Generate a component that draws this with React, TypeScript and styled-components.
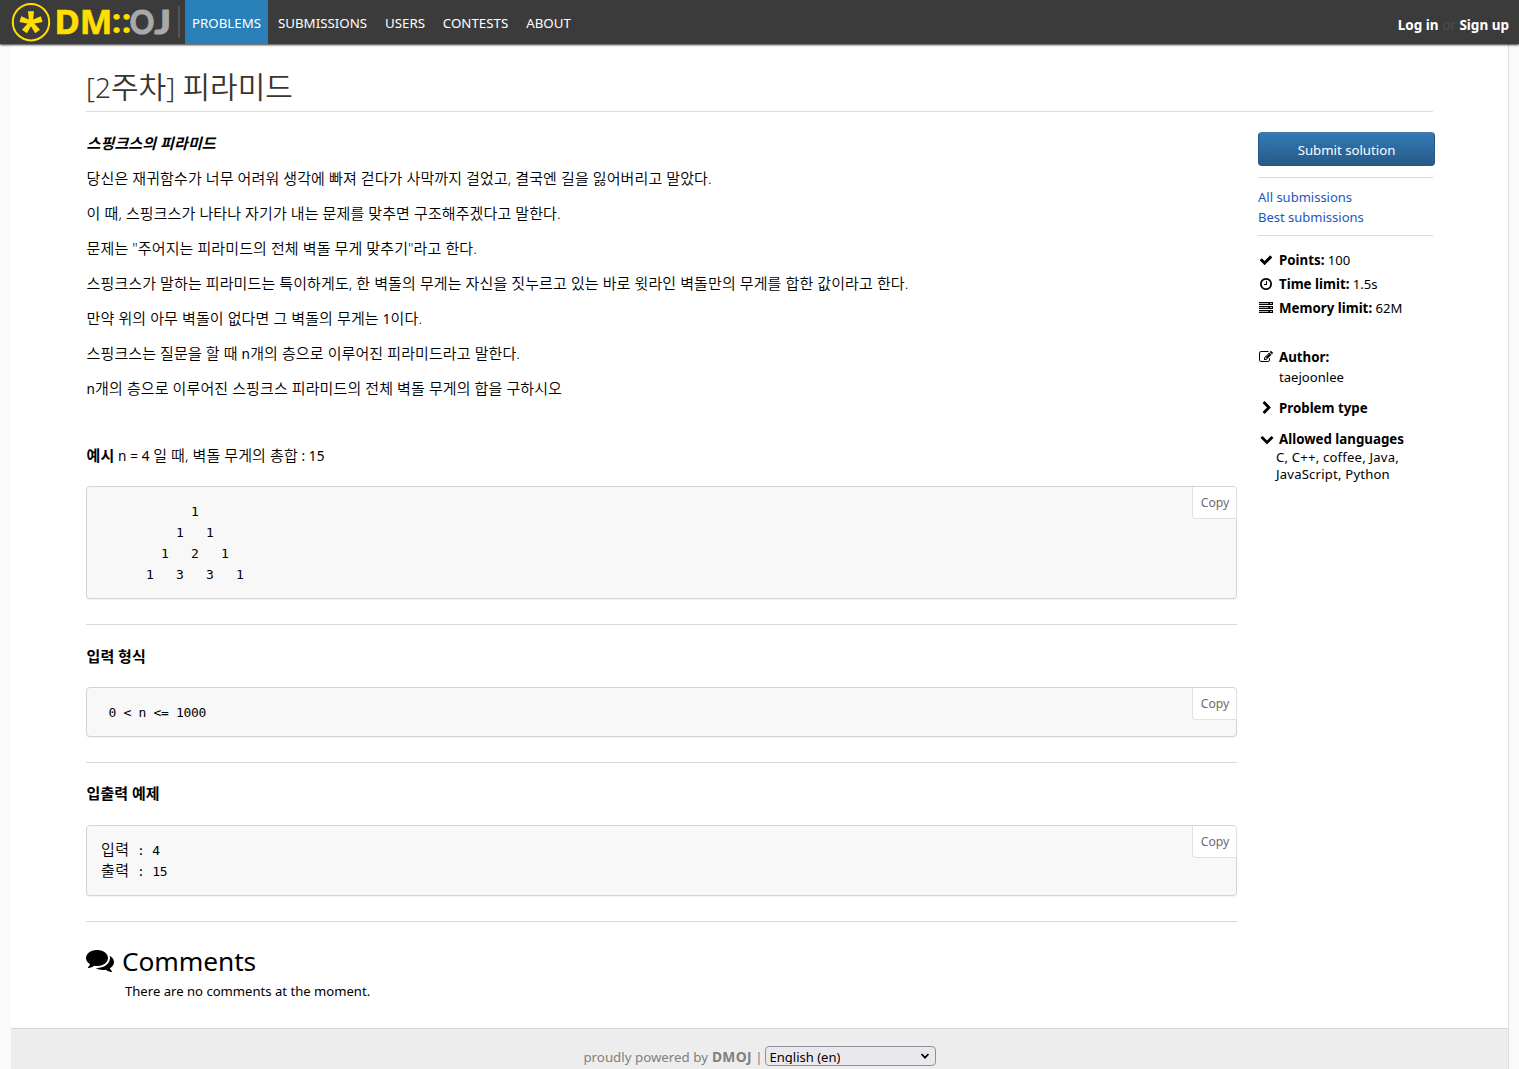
import React from "react";
import styled, { createGlobalStyle } from "styled-components";

const sans = `"Noto Sans", "Noto Sans CJK KR", sans-serif`;

const GlobalStyle = createGlobalStyle`
  * { box-sizing: border-box; }
  body {
    margin: 0;
    background: #fafafa;
    color: #000;
    font-family: ${sans};
    font-size: 13.1px;
    overflow: hidden;
  }
  a { text-decoration: none; color: inherit; }
`;

const Page = styled.div`
  display: flex;
  flex-direction: column;
  height: 1069px;
`;

/* ---------- navigation ---------- */

const NavBar = styled.nav`
  display: flex;
  flex: 0 0 44px;
  height: 44px;
  padding-right: 10px;
  background: #3b3b3b;
  box-shadow: 0 1px 2px #333;
  position: relative;
`;

const LogoLink = styled.a`
  display: block;
  width: 178px;
  height: 44px;
`;

const LogoSvg = styled.svg`
  display: block;
  overflow: visible;
`;

const NavDivider = styled.span`
  width: 2px;
  height: 32px;
  margin: 6px 5px 0 0;
  background: #555;
`;

const NavItem = styled.a<{ $width: number; $active?: boolean }>`
  width: ${(p) => p.$width}px;
  height: 44px;
  line-height: 47px;
  text-align: center;
  font-size: 13.3px;
  color: #fff;
  background: ${(p) => (p.$active ? "#2980b9" : "transparent")};
`;

const UserLinks = styled.span`
  margin-left: auto;
  line-height: 51px;
  height: 44px;
  font-size: 13.5px;
  color: #4f4c47;
  white-space: pre;
  a { color: #fff; font-weight: 700; }
`;

/* ---------- content ---------- */

const Content = styled.main`
  flex: 0 0 984px;
  margin: 0 10px 0 11px;
  padding: 20px 75px 0;
  background: #fff;
  border-right: 1px solid #ddd;
`;

const Title = styled.h2`
  height: 48px;
  margin: 0;
  border-bottom: 1px solid #ddd;
  font-size: 28px;
  font-weight: 300;
  line-height: 46px;
  color: #393630;
`;

const TitleHangul = styled.span`
  font-size: 30px;
  font-weight: 350;
`;

const Columns = styled.div`
  display: flex;
  gap: 21px;
`;

const Statement = styled.article`
  width: 1151px;
  padding-top: 21px;
  font-size: 15px;
`;

const Paragraph = styled.p<{ $after?: number }>`
  height: 21px;
  margin: 0 0 ${(p) => p.$after ?? 14}px;
  padding-left: 0.6px;
  line-height: 21px;
  letter-spacing: 0.1px;
  white-space: pre;
`;

const Hangeul = styled.span`
  font-family: "Noto Sans", "Noto Sans CJK KR", sans-serif;
  font-weight: 350;
`;

const Latin = styled.span`
  font-size: 13.6px;
`;

const Heading = styled.h4<{ $after: number }>`
  height: 21px;
  margin: 0 0 ${(p) => p.$after}px;
  padding-left: 0.6px;
  line-height: 21px;
  font-size: 15px;
  font-weight: 700;
`;

const CodeBox = styled.div`
  position: relative;
  padding: 14px 14px 13px;
  border: 1px solid #d3d3d3;
  border-radius: 4px;
  background: #f8f8f8;
  box-shadow: 0 1px 1px rgba(0, 0, 0, 0.06);
`;

const CodeLines = styled.div`
  display: flex;
  flex-direction: column;
  font: 13px/21px "DejaVu Sans Mono", monospace;
  letter-spacing: -0.32px;
  white-space: pre;
`;

const CodeLine = styled.span`
  display: block;
  height: 21px;
`;

const CodeHangul = styled.span`
  font: 350 15px/0 "Noto Sans CJK KR", sans-serif;
  letter-spacing: 0.5px;
`;

const CopyButton = styled.span`
  position: absolute;
  top: 0;
  right: -1px;
  width: 45px;
  height: 32px;
  padding-left: 1px;
  border: 1px solid #e0e0e8;
  border-top: 0;
  border-radius: 0 4px 0 4px;
  background: #fff;
  color: #6c6c6c;
  font-size: 12.2px;
  line-height: 32px;
  text-align: center;
`;

const Rule = styled.hr<{ $before: number; $after: number }>`
  height: 1px;
  margin: ${(p) => p.$before}px 0 ${(p) => p.$after}px;
  border: 0;
  background: #d9d9d9;
`;

const CommentsTitle = styled.h2`
  display: flex;
  align-items: center;
  gap: 8px;
  height: 38px;
  margin: 0;
  font-size: 26.3px;
  font-weight: 400;
  line-height: 36px;
  letter-spacing: -0.1px;
  svg { margin-bottom: 2px; }
`;

const NoComments = styled.p`
  height: 20px;
  margin: 1px 0 0 39px;
  font-size: 13.1px;
  line-height: 20px;
`;

/* ---------- sidebar ---------- */

const Sidebar = styled.aside`
  width: 175px;
  padding-top: 20px;
`;

const SubmitButton = styled.a`
  display: block;
  width: 177px;
  height: 34px;
  border: 1px solid #245682;
  border-top-color: #4d7da6;
  border-radius: 4px;
  background: linear-gradient(#337ab7, #265a88);
  color: #fff;
  font-size: 13.2px;
  line-height: 34px;
  text-align: center;
`;

const SideLink = styled.a`
  display: block;
  height: 20px;
  line-height: 20px;
  font-size: 13px;
  color: #1958c1;
`;

const InfoRow = styled.div<{ $height: number; $before?: number }>`
  display: flex;
  align-items: center;
  gap: 5px;
  height: ${(p) => p.$height}px;
  margin-top: ${(p) => p.$before ?? 0}px;
  white-space: nowrap;
  b { font-size: 13.3px; }
`;

const Author = styled.div`
  height: 20px;
  margin: 0 0 5px 21px;
  line-height: 20px;
`;

const Languages = styled.div`
  margin: -5px 0 0 18px;
  line-height: 17.4px;
  letter-spacing: 0.2px;
  white-space: pre;
`;

/* ---------- footer ---------- */

const Footer = styled.footer`
  display: flex;
  flex: 1;
  justify-content: center;
  align-items: flex-start;
  margin: 0 10px 0 11px;
  padding-top: 17px;
  border-top: 1px solid #d5d5d5;
  border-right: 1px solid #ddd;
  background: #ededed;
  color: #808080;
`;

const FooterText = styled.span`
  font-size: 13.3px;
  line-height: 22px;
  white-space: pre;
  b { margin-left: 0.6px; font-size: 13.8px; letter-spacing: 0.3px; }
`;

const LanguageSelect = styled.span`
  display: flex;
  justify-content: space-between;
  width: 171px;
  height: 20px;
  margin-left: 2px;
  padding: 0 5px 0 4px;
  overflow: hidden;
  border: 1px solid #8f8f9d;
  border-radius: 4px;
  background: #e9e9ed;
  color: #000;
`;

const SelectValue = styled.span`
  height: 16px;
  margin-top: 1px;
  overflow: hidden;
  font-size: 13px;
  line-height: 19px;
`;

const SelectArrow = styled.svg`
  width: 10px;
  height: 18px;
`;

/* ---------- icons ---------- */

const icons = {
  check: "M1671 566q0 40-28 68l-724 724-136 136q-28 28-68 28t-68-28l-136-136-362-362q-28-28-28-68t28-68l136-136q28-28 68-28t68 28l294 295 656-657q28-28 68-28t68 28l136 136q28 28 28 68z",
  clock: "M1024 544v448q0 14-9 23t-23 9h-320q-14 0-23-9t-9-23v-64q0-14 9-23t23-9h224v-352q0-14 9-23t23-9h64q14 0 23 9t9 23zm416 352q0-148-73-273t-198-198-273-73-273 73-198 198-73 273 73 273 198 198 273 73 273-73 198-198 73-273zm224 0q0 209-103 385.5t-279.5 279.5-385.5 103-385.5-103-279.5-279.5-103-385.5 103-385.5 279.5-279.5 385.5-103 385.5 103 279.5 279.5 103 385.5z",
  edit: "M888 1184l116-116-152-152-116 116v56h96v96h56zm440-720q-16-16-33 1l-350 350q-17 17-1 33t33-1l350-350q17-17 1-33zm80 594v190q0 119-84.5 203.5t-203.5 84.5h-832q-119 0-203.5-84.5t-84.5-203.5v-832q0-119 84.5-203.5t203.5-84.5h832q63 0 117 25 15 7 18 23 3 17-9 29l-49 49q-14 14-32 8-23-6-45-6h-832q-66 0-113 47t-47 113v832q0 66 47 113t113 47h832q66 0 113-47t47-113v-126q0-13 9-22l64-64q15-15 35-7t20 29zm-96-738l288 288-672 672h-288v-288zm444 132l-92 92-288-288 92-92q28-28 68-28t68 28l152 152q28 28 28 68t-28 68z",
  right: "M1363 877l-742 742q-19 19-45 19t-45-19l-166-166q-19-19-19-45t19-45l531-531-531-531q-19-19-19-45t19-45l166-166q19-19 45-19t45 19l742 742q19 19 19 45t-19 45z",
  down: "M1683 808l-742 741q-19 19-45 19t-45-19l-742-741q-19-19-19-45.500t19-45.500l166-165q19-19 45-19t45 19l531 531 531-531q19-19 45-19t45 19l166 165q19 19 19 45.500t-19 45.500z",
  comments: "M1408 768q0 139-94 257t-256.500 186.500-353.500 68.500q-86 0-176-16-124 88-278 128-36 9-86 16h-3q-11 0-20.500-8t-11.500-21q-1-3-1-6.500t.5-6.500 2-6l2.500-5 3.500-5.500 4-5 4.500-5 4-4.500q5-6 23-25t26-29.500 22.500-29 25-38.500 20.500-44q-124-72-195-177t-71-224q0-139 94-257t256.500-186.500 353.500-68.500 353.500 68.500 256.500 186.500 94 257zm384 256q0 120-71 224.500t-195 176.500q10 24 20.500 44t25 38.500 22.500 29 26 29.500 23 25q1 1 4 4.500t4.500 5 4 5 3.500 5.500l2.500 5 2 6 .5 6.500-1 6.500q-3 14-13 22t-22 7q-50-7-86-16-154-40-278-128-90 16-176 16-271 0-472-132 58 4 88 4 161 0 309-45t264-129q125-92 192-212t67-254q0-77-23-152 129 71 204 178t75 230z",
};

const IconSvg = styled.svg<{ $size: number; $shift: number }>`
  flex: none;
  width: ${(p) => p.$size}px;
  height: ${(p) => p.$size}px;
  margin-left: ${(p) => p.$shift}px;
  margin-right: ${(p) => (p.$size > 20 ? 0 : 2 - p.$shift)}px;
  fill: #000;
`;

function Icon({ name, size = 14, shift = 1 }: { name: keyof typeof icons; size?: number; shift?: number }) {
  return (
    <IconSvg $size={size} $shift={shift} viewBox="0 0 1792 1792">
      <path d={icons[name]} />
    </IconSvg>
  );
}

function ServerIcon() {
  return (
    <IconSvg $size={14} $shift={1} viewBox="0 0 14 14">
      {[1, 5, 9].map((y) => (
        <g key={y}>
          <path d={`M0 ${y}h14v3H0z`} opacity="0.3" />
          <path d={`M0 ${y}h14v1H0zM0 ${y + 2}h14v1H0zM9.500 ${y}h1.500v3h-1.500zM13 ${y}h1v3h-1z`} />
        </g>
      ))}
    </IconSvg>
  );
}

function Logo() {
  return (
    <LogoSvg width="178" height="44" viewBox="0 0 178 44" fontFamily='"Noto Sans", sans-serif' fontWeight="700">
      <circle cx="31" cy="22.200" r="18.200" fill="none" stroke="#ffde00" strokeWidth="2" />
      <g fill="#ffde00">
        {[0, 72, 144, 216, 288].map((a) => (
          <path key={a} d="M29.200 23L28 11.300H34L32.800 23Z" transform={`rotate(${a} 31 22.500)`} />
        ))}
      </g>
      <text x="54.500" y="34" fontSize="33.500" fill="#ffde00" stroke="#ffde00" strokeWidth="0.600" textLength="58" lengthAdjust="spacingAndGlyphs">DM</text>
      <text x="111.500" y="32.500" fontSize="33.500" fill="#ffde00" textLength="20" lengthAdjust="spacingAndGlyphs">::</text>
      <g fontFamily="Lato, sans-serif" fontSize="33" fill="#a9a9a9" stroke="#a9a9a9" strokeWidth="1.200">
        <text x="129.800" y="34" textLength="24.500" lengthAdjust="spacingAndGlyphs">O</text>
        <text x="154.500" y="34" textLength="16.500" lengthAdjust="spacingAndGlyphs">J</text>
      </g>
    </LogoSvg>
  );
}

const pyramid = [
  "            1",
  "          1   1",
  "        1   2   1",
  "      1   3   3   1",
];

export default function App() {
  return (
    <Page>
      <GlobalStyle />
      <NavBar>
        <LogoLink href="#"><Logo /></LogoLink>
        <NavDivider />
        <NavItem href="#" $width={83} $active>PROBLEMS</NavItem>
        <NavItem href="#" $width={109}>SUBMISSIONS</NavItem>
        <NavItem href="#" $width={56}>USERS</NavItem>
        <NavItem href="#" $width={85}>CONTESTS</NavItem>
        <NavItem href="#" $width={61}>ABOUT</NavItem>
        <UserLinks><a href="#">Log in</a> or <a href="#">Sign up</a></UserLinks>
      </NavBar>

      <Content>
        <Title>[2<TitleHangul>주차</TitleHangul>] <TitleHangul>피라미드</TitleHangul></Title>
        <Columns>
          <Statement>
            <Paragraph><b><i>스핑크스의 피라미드</i></b></Paragraph>
            <Paragraph><Hangeul>당신은 재귀함수가 너무 어려워 생각에 빠져 걷다가 사막까지 걸었고, 결국엔 길을 잃어버리고 말았다.</Hangeul></Paragraph>
            <Paragraph><Hangeul>이 때, 스핑크스가 나타나 자기가 내는 문제를 맞추면 구조해주겠다고 말한다.</Hangeul></Paragraph>
            <Paragraph><Hangeul>문제는 "주어지는 피라미드의 전체 벽돌 무게 맞추기"라고 한다.</Hangeul></Paragraph>
            <Paragraph><Hangeul>스핑크스가 말하는 피라미드는 특이하게도, 한 벽돌의 무게는 자신을 짓누르고 있는 바로 윗라인 벽돌만의 무게를 합한 값이라고 한다.</Hangeul></Paragraph>
            <Paragraph><Hangeul>만약 위의 아무 벽돌이 없다면 그 벽돌의 무게는 </Hangeul><Latin>1</Latin><Hangeul>이다.</Hangeul></Paragraph>
            <Paragraph><Hangeul>스핑크스는 질문을 할 때 </Hangeul><Latin>n</Latin><Hangeul>개의 층으로 이루어진 피라미드라고 말한다.</Hangeul></Paragraph>
            <Paragraph $after={46}><Latin>n</Latin><Hangeul>개의 층으로 이루어진 스핑크스 피라미드의 전체 벽돌 무게의 합을 구하시오</Hangeul></Paragraph>
            <Paragraph $after={20}><b>예시</b><Latin> n = 4 </Latin><Hangeul>일 때, 벽돌 무게의 총합</Hangeul><Latin> : 15</Latin></Paragraph>
            <CodeBox>
              <CodeLines>{pyramid.map((line) => <CodeLine key={line}>{line}</CodeLine>)}</CodeLines>
              <CopyButton>Copy</CopyButton>
            </CodeBox>
            <Rule $before={25} $after={21} />
            <Heading $after={20}>입력 형식</Heading>
            <CodeBox>
              <CodeLines><CodeLine>{" 0 < n <= 1000"}</CodeLine></CodeLines>
              <CopyButton>Copy</CopyButton>
            </CodeBox>
            <Rule $before={25} $after={20} />
            <Heading $after={21}>입출력 예제</Heading>
            <CodeBox>
              <CodeLines>
                <CodeLine><CodeHangul>입력</CodeHangul> : 4</CodeLine>
                <CodeLine><CodeHangul>출력</CodeHangul> : 15</CodeLine>
              </CodeLines>
              <CopyButton>Copy</CopyButton>
            </CodeBox>
            <Rule $before={25} $after={20} />
            <CommentsTitle><Icon name="comments" size={28} shift={0} />Comments</CommentsTitle>
            <NoComments>There are no comments at the moment.</NoComments>
          </Statement>

          <Sidebar>
            <SubmitButton href="#">Submit solution</SubmitButton>
            <Rule $before={11} $after={9} />
            <SideLink href="#">All submissions</SideLink>
            <SideLink href="#">Best submissions</SideLink>
            <Rule $before={8} $after={12} />
            <InfoRow $height={24}><Icon name="check" shift={1} /><span><b>Points:</b> 100</span></InfoRow>
            <InfoRow $height={24}><Icon name="clock" shift={1} /><span><b>Time limit:</b> 1.5s</span></InfoRow>
            <InfoRow $height={24}><ServerIcon /><span><b>Memory limit:</b> 62M</span></InfoRow>
            <InfoRow $height={20} $before={27}><Icon name="edit" shift={1} /><b>Author:</b></InfoRow>
            <Author>taejoonlee</Author>
            <InfoRow $height={31}><Icon name="right" shift={1.5} /><b>Problem type</b></InfoRow>
            <InfoRow $height={31}><Icon name="down" shift={2} /><b>Allowed languages</b></InfoRow>
            <Languages>{"C, C++, coffee, Java,\nJavaScript, Python"}</Languages>
          </Sidebar>
        </Columns>
      </Content>

      <Footer>
        <FooterText>proudly powered by <b>DMOJ</b> |</FooterText>
        <LanguageSelect>
          <SelectValue>English (en)</SelectValue>
          <SelectArrow viewBox="0 0 10 18">
            <path d="M1.500 7L5 10.700L8.500 7" fill="none" stroke="#000" strokeWidth="1.700" />
          </SelectArrow>
        </LanguageSelect>
      </Footer>
    </Page>
  );
}
